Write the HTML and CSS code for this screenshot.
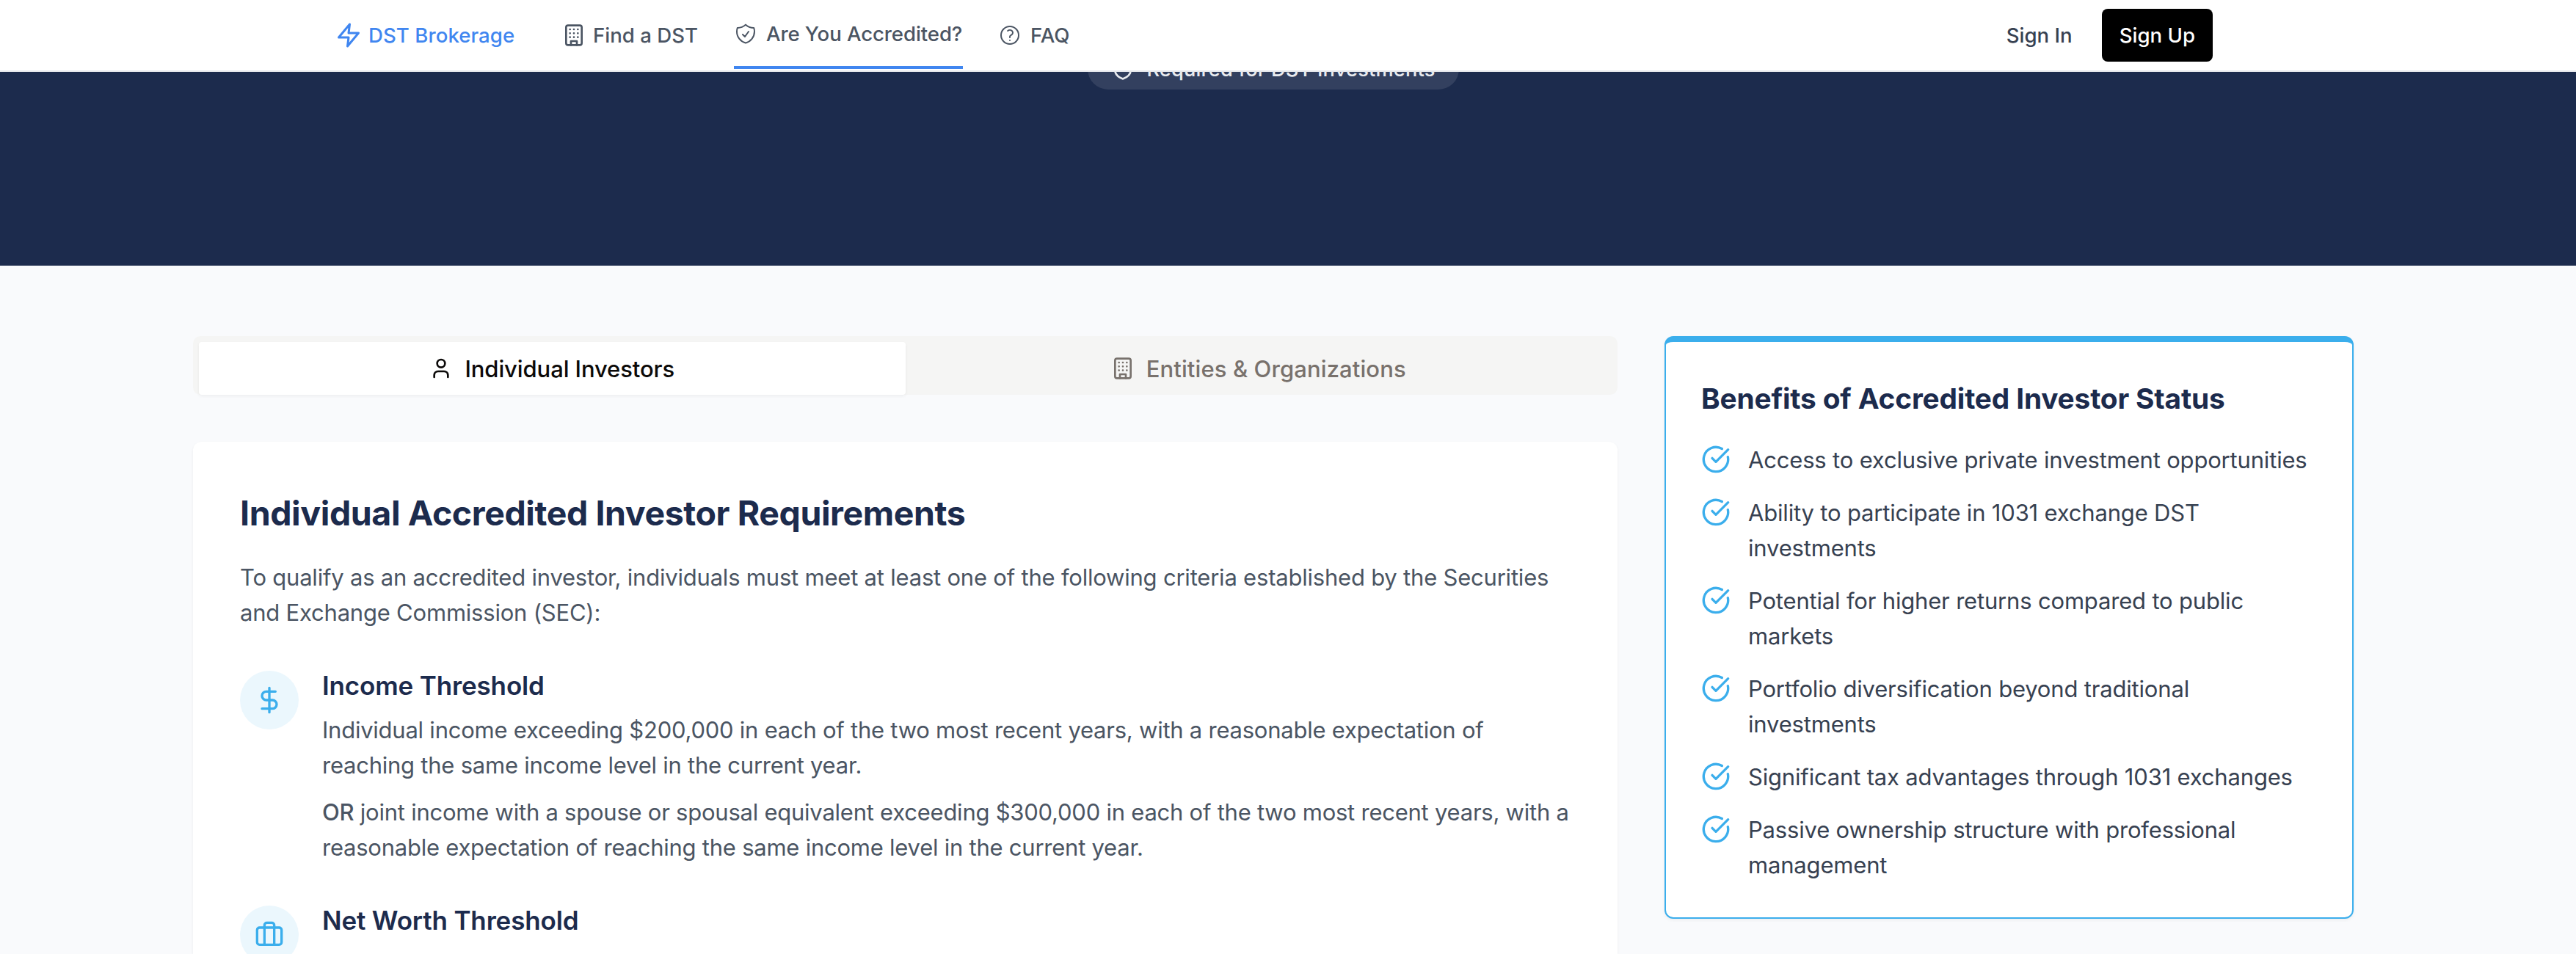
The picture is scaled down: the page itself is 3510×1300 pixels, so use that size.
FILE: index.html
```html
<!DOCTYPE html>
<html lang="en">
<head>
<meta charset="utf-8">
<title>Are You Accredited? | DST Brokerage</title>
<link rel="stylesheet" href="styles.css">
</head>
<body>
<svg class="sprite" aria-hidden="true">
  <symbol id="zap" viewBox="0 0 24 24"><path d="M13 2 3 14h9l-1 8 10-12h-9l1-8z"/></symbol>
  <symbol id="building" viewBox="0 0 24 24"><rect x="4" y="2" width="16" height="20" rx="2"/><path d="M9 22v-4h6v4M8 6h.01M16 6h.01M12 6h.01M12 10h.01M12 14h.01M16 10h.01M16 14h.01M8 10h.01M8 14h.01"/></symbol>
  <symbol id="shield" viewBox="0 0 24 24"><path d="M20 13c0 5-3.5 7.5-7.66 8.95a1 1 0 0 1-.67-.01C7.5 20.5 4 18 4 13V6a1 1 0 0 1 1-1c2 0 4.5-1.2 6.24-2.72a1.17 1.17 0 0 1 1.52 0C14.51 3.81 17 5 19 5a1 1 0 0 1 1 1z"/></symbol>
  <symbol id="shield-check" viewBox="0 0 24 24"><path d="M9 12.75 11.25 15 15 9.75m-3-7.036A11.959 11.959 0 0 1 3.598 6 11.99 11.99 0 0 0 3 9.749c0 5.592 3.824 10.29 9 11.623 5.176-1.332 9-6.03 9-11.622 0-1.31-.21-2.571-.598-3.751h-.152c-3.196 0-6.1-1.248-8.25-3.285Z"/></symbol>
  <symbol id="help" viewBox="0 0 24 24"><path d="M9.879 7.519c1.171-1.025 3.071-1.025 4.242 0 1.172 1.025 1.172 2.687 0 3.712-.203.179-.43.326-.67.442-.745.361-1.45.999-1.45 1.827v.75M21 12a9 9 0 1 1-18 0 9 9 0 0 1 18 0Zm-9 5.25h.008v.008H12v-.008Z"/></symbol>
  <symbol id="user" viewBox="0 0 24 24"><path d="M19 21v-2a4 4 0 0 0-4-4H9a4 4 0 0 0-4 4v2"/><circle cx="12" cy="7" r="4"/></symbol>
  <symbol id="dollar" viewBox="0 0 24 24"><path d="M12 2v20M17 5H9.5a3.5 3.5 0 0 0 0 7h5a3.5 3.5 0 0 1 0 7H6"/></symbol>
  <symbol id="luggage" viewBox="0 0 24 24"><path d="M16 20V4a2 2 0 0 0-2-2h-4a2 2 0 0 0-2 2v16"/><rect x="2" y="6" width="20" height="14" rx="2"/></symbol>
  <symbol id="check" viewBox="0 0 24 24"><path d="M21.801 10A10 10 0 1 1 17 3.335"/><path d="m9 11 3 3L22 4"/></symbol>
</svg>

<header class="header">
  <nav class="nav">
    <a class="brand"><svg class="icon brand-icon"><use href="#zap"/></svg><span>DST Brokerage</span></a>
    <a class="link link-find"><svg class="icon"><use href="#building"/></svg><span>Find a DST</span></a>
    <a class="link link-active"><svg class="icon icon-thin"><use href="#shield-check"/></svg><span>Are You Accredited?</span></a>
    <a class="link"><svg class="icon icon-thin"><use href="#help"/></svg><span>FAQ</span></a>
  </nav>
  <div class="account">
    <a class="signin">Sign In</a>
    <a class="signup">Sign Up</a>
  </div>
</header>

<section class="hero">
  <div class="pill"><svg class="icon"><use href="#shield"/></svg><span>Required for DST Investments</span></div>
</section>

<main class="content">
  <div class="main-col">
    <div class="tabs">
      <div class="tab tab-on"><svg class="icon"><use href="#user"/></svg><span>Individual Investors</span></div>
      <div class="tab"><svg class="icon"><use href="#building"/></svg><span>Entities &amp; Organizations</span></div>
    </div>
    <section class="card">
      <h2 class="card-title">Individual Accredited Investor Requirements</h2>
      <p class="body-text intro">To qualify as an accredited investor, individuals must meet at least one of the following criteria established by the Securities<br>and Exchange Commission (SEC):</p>
      <div class="criterion">
        <div class="badge"><svg class="icon"><use href="#dollar"/></svg></div>
        <div>
          <h3 class="criterion-title">Income Threshold</h3>
          <p class="body-text">Individual income exceeding $200,000 in each of the two most recent years, with a reasonable expectation of<br>reaching the same income level in the current year.</p>
          <p class="body-text body-next"><strong>OR</strong> joint income with a spouse or spousal equivalent exceeding $300,000 in each of the two most recent years, with a<br>reasonable expectation of reaching the same income level in the current year.</p>
        </div>
      </div>
      <div class="criterion">
        <div class="badge"><svg class="icon"><use href="#luggage"/></svg></div>
        <div>
          <h3 class="criterion-title">Net Worth Threshold</h3>
        </div>
      </div>
    </section>
  </div>
  <aside class="benefits">
    <h2 class="benefits-title">Benefits of Accredited Investor Status</h2>
    <ul class="benefit-list">
      <li class="benefit"><svg class="icon"><use href="#check"/></svg><span>Access to exclusive private investment opportunities</span></li>
      <li class="benefit"><svg class="icon"><use href="#check"/></svg><span>Ability to participate in 1031 exchange DST<br>investments</span></li>
      <li class="benefit"><svg class="icon"><use href="#check"/></svg><span>Potential for higher returns compared to public<br>markets</span></li>
      <li class="benefit"><svg class="icon"><use href="#check"/></svg><span>Portfolio diversification beyond traditional<br>investments</span></li>
      <li class="benefit"><svg class="icon"><use href="#check"/></svg><span>Significant tax advantages through 1031 exchanges</span></li>
      <li class="benefit"><svg class="icon"><use href="#check"/></svg><span>Passive ownership structure with professional<br>management</span></li>
    </ul>
  </aside>
</main>
</body>
</html>
```
FILE: styles.css
```css
* { box-sizing: border-box; }
body {
  margin: 0;
  height: 1300px;
  overflow: hidden;
  background: #f9fafc;
  font-family: Inter, "Liberation Sans", sans-serif;
  color: #374151;
  white-space: nowrap;
}
h2, h3, p, ul { margin: 0; padding: 0; }
.sprite { position: absolute; width: 0; height: 0; }
.icon {
  flex: none;
  width: 32px;
  height: 32px;
  fill: none;
  stroke: currentColor;
  stroke-width: 2;
  stroke-linecap: round;
  stroke-linejoin: round;
}
.icon-thin { stroke-width: 1.5; }

.header {
  position: relative;
  z-index: 1;
  display: flex;
  justify-content: space-between;
  height: 98px;
  padding: 0 495px 0 457px;
  background: #fff;
  border-bottom: 2px solid #e5e7eb;
  font-size: 27.6px;
  font-weight: 500;
}
.nav { display: flex; }
.brand, .link { display: flex; align-items: center; color: #4b5563; }
.brand { width: 309px; gap: 9px; color: #4086f0; letter-spacing: 0.05px; }
.brand-icon { width: 36px; height: 36px; }
.link { gap: 12px; }
.link-find { width: 234px; gap: 10px; }
.link-active {
  width: 312px;
  height: 94px;
  margin-right: 48px;
  padding-top: 2px;
  border-bottom: 4px solid #4086f0;
  letter-spacing: -0.1px;
}
.account { display: flex; align-items: center; gap: 40px; }
.signup {
  display: flex;
  align-items: center;
  height: 72px;
  padding: 0 24px;
  background: #000;
  border-radius: 8px;
  color: #fff;
}

.hero { display: flex; justify-content: center; height: 264px; background: #1c2b4d; }
.pill {
  display: flex;
  align-items: center;
  gap: 16px;
  height: 56px;
  margin: -32px 40px 0 0;
  padding: 0 32px;
  border-radius: 28px;
  background: rgba(255, 255, 255, 0.1);
  color: #e9ebef;
  font-size: 27.2px;
  font-weight: 500;
  letter-spacing: 0.2px;
}

.content { display: flex; align-items: flex-start; gap: 64px; padding: 96px 303px 0 263px; }
.main-col { width: 1941px; }
.tabs {
  display: flex;
  height: 80px;
  padding: 8px 8px 0;
  border-radius: 10px;
  background: #f5f5f4;
  font-size: 31px;
  font-weight: 500;
}
.tab {
  flex: 1;
  display: flex;
  align-items: center;
  justify-content: center;
  gap: 16px;
  height: 72px;
  color: #78716c;
  letter-spacing: 0.1px;
}
.tab-on {
  background: #fff;
  color: #0c0a09;
  border-radius: 4px;
  box-shadow: 0 2px 4px rgba(0, 0, 0, 0.05);
  letter-spacing: -0.1px;
}
.card {
  height: 698px;
  overflow: hidden;
  margin-top: 64px;
  padding: 65px 64px 0;
  border-radius: 12px 12px 0 0;
  background: #fff;
  box-shadow: 0 2px 4px rgba(0, 0, 0, 0.05);
}
.card-title {
  margin-bottom: 32px;
  color: #1c2b4d;
  font-size: 46.5px;
  line-height: 64px;
  font-weight: 700;
  letter-spacing: -0.42px;
}
.body-text { color: #4b5563; font-size: 31px; line-height: 48px; letter-spacing: -0.24px; }
.body-text strong { font-weight: 500; }
.intro { letter-spacing: -0.21px; }
.body-next { margin-top: 16px; }
.criterion { display: flex; gap: 32px; margin-top: 47px; }
.badge {
  flex: none;
  display: flex;
  align-items: center;
  justify-content: center;
  width: 80px;
  height: 80px;
  margin-top: 8px;
  border-radius: 50%;
  background: #ebf7fd;
  color: #3baeec;
}
.badge .icon { width: 40px; height: 40px; }
.criterion-title {
  margin-bottom: 9px;
  color: #1c2b4d;
  font-size: 35px;
  line-height: 56px;
  font-weight: 600;
  letter-spacing: -0.15px;
}

.benefits {
  width: 939px;
  height: 794px;
  padding: 49px 48px 0;
  border: 2px solid #3baeec;
  border-top-width: 8px;
  border-radius: 12px;
  background: #fff;
  box-shadow: 0 2px 4px rgba(0, 0, 0, 0.05);
}
.benefits-title {
  margin-bottom: 32px;
  color: #1c2b4d;
  font-size: 38.8px;
  line-height: 56px;
  font-weight: 700;
  letter-spacing: -0.16px;
}
.benefit-list { display: flex; flex-direction: column; gap: 24px; list-style: none; }
.benefit { display: flex; gap: 24px; font-size: 31px; line-height: 48px; letter-spacing: -0.18px; }
.benefit .icon { width: 40px; height: 40px; margin-top: 3px; color: #3baeec; }
```
